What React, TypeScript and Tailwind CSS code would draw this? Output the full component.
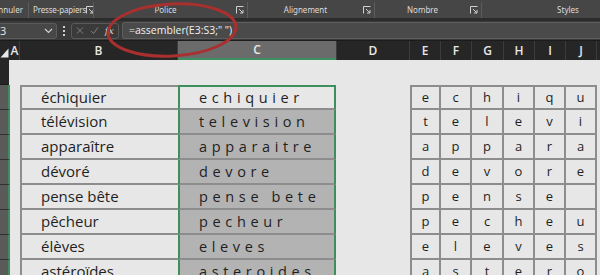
import React from 'react';

const words = [
  ['échiquier', 'echiquier', 'echiqu'],
  ['télévision', 'television', 'televi'],
  ['apparaître', 'apparaitre', 'appara'],
  ['dévoré', 'devore', 'devore'],
  ['pense bête', 'pense bete', 'pense '],
  ['pêcheur', 'pecheur', 'pecheu'],
  ['élèves', 'eleves', 'eleves'],
  ['astéroïdes', 'asteroides', 'astero'],
];

const letterCols = ['w-[31px]', 'w-[31px]', 'w-[32px]', 'w-[31px]', 'w-[31px]', 'w-[31px]'];
const headers = [
  { l: 'E', w: 'w-[31px]' },
  { l: 'F', w: 'w-[31px]' },
  { l: 'G', w: 'w-[32px]' },
  { l: 'H', w: 'w-[31px]' },
  { l: 'I', w: 'w-[31px]' },
  { l: 'J', w: 'w-[31px]' },
];

function Launcher() {
  return (
    <svg width="8" height="8" viewBox="0 0 8 8" className="shrink-0">
      <path d="M0.5 7.5V0.5H7.5" fill="none" stroke="#cfcfcf" strokeWidth="1" />
      <path d="M3 3L7 7M7 4V7H4" fill="none" stroke="#cfcfcf" strokeWidth="1" />
    </svg>
  );
}

function Sep() {
  return <div className="w-px h-full bg-[#5c5c5c] shrink-0" />;
}

export default function App() {
  return (
    <div className="relative w-[600px] h-[275px] overflow-hidden bg-[#e7e7e7] font-['Open_Sans','Noto_Sans',sans-serif]">
      {/* Ribbon group labels */}
      <div className="flex items-center h-[18px] pt-[2px] bg-[#464646] text-[8px] text-[#dcdcdc] whitespace-nowrap font-['Noto_Sans',sans-serif]">
        <div className="w-[28px] shrink-0 overflow-hidden flex justify-end pr-[5px] leading-none">Annuler</div>
        <Sep />
        <div className="flex items-center justify-between w-[64px] shrink-0 pl-[4px] pr-[3px]">
          <span className="leading-none tracking-[-0.02em]">Presse-papiers</span>
          <Launcher />
        </div>
        <Sep />
        <div className="flex items-center w-[153px] shrink-0 pr-[3px]">
          <span className="flex-1 text-center leading-none pl-[1px]">Police</span>
          <Launcher />
        </div>
        <Sep />
        <div className="flex items-center w-[126px] shrink-0 pr-[3px]">
          <span className="flex-1 text-center leading-none">Alignement</span>
          <Launcher />
        </div>
        <Sep />
        <div className="flex items-center w-[106px] shrink-0 pr-[3px]">
          <span className="flex-1 text-center leading-none">Nombre</span>
          <Launcher />
        </div>
        <Sep />
        <div className="flex-1 text-center leading-none pl-[54px]">Styles</div>
      </div>
      <div className="h-[3px] bg-[#2c2c2c]" />

      {/* Formula bar */}
      <div className="flex items-center h-[19px] bg-[#3a3a3a] gap-[3px]">
        <div className="flex items-center justify-between w-[57px] h-[16px] bg-[#474747] border border-[#5a5a5a] rounded-r-[3px] border-l-0 pr-[3px] overflow-hidden">
          <span className="text-[11px] text-[#e5e5e5] leading-none">3</span>
          <svg width="9" height="6" viewBox="0 0 9 6">
            <path d="M1 1L4.5 4.5L8 1" fill="none" stroke="#d0d0d0" strokeWidth="1.2" />
          </svg>
        </div>
        <div className="flex flex-col gap-[2px] w-[8px] items-center">
          <span className="w-[2px] h-[2px] bg-[#cfcfcf]" />
          <span className="w-[2px] h-[2px] bg-[#cfcfcf]" />
          <span className="w-[2px] h-[2px] bg-[#cfcfcf]" />
        </div>
        <div className="flex items-center gap-[6px] w-[48px] h-[16px] border border-[#5a5a5a] rounded-[3px] px-[4px]">
          <svg width="9" height="9" viewBox="0 0 9 9">
            <path d="M1 1L8 8M8 1L1 8" stroke="#8a8a8a" strokeWidth="1" />
          </svg>
          <svg width="10" height="9" viewBox="0 0 10 9">
            <path d="M1 5L4 8L9 1" fill="none" stroke="#8a8a8a" strokeWidth="1" />
          </svg>
          <span className="text-[10px] italic text-[#d8d8d8] leading-none font-['DejaVu_Serif',serif]">fx</span>
        </div>
        <div className="flex items-center flex-1 h-[17px] bg-[#4a4a4a] border border-[#5e5e5e] rounded-l-[3px] border-r-0 pl-[6px]">
          <span className="text-[10.5px] text-[#f0f0f0] leading-none whitespace-nowrap">=assembler(E3:S3;&quot; &quot;)</span>
        </div>
      </div>

      {/* Column headers */}
      <div className="flex h-[20px] bg-[#262626] text-[12px] text-[#e8e8e8] font-semibold border-t border-[#1c1c1c]">
        <div className="w-[10px] flex items-end pb-[2px]">
          <svg width="9" height="10" viewBox="0 0 9 10">
            <path d="M8.5 0.5V9.5H0.5Z" fill="#e8e8e8" />
          </svg>
        </div>
        <div className="w-[10px] flex items-center justify-center border-r border-[#3c3c3c]">A</div>
        <div className="w-[158px] flex items-center justify-center border-r border-[#3c3c3c]">B</div>
        <div className="w-[158px] flex items-center justify-center bg-[#6b6b6b] border-b-2 border-[#3d8f5e]">C</div>
        <div className="w-[74px] flex items-center justify-center border-l border-r border-[#3c3c3c]">D</div>
        {headers.map((h) => (
          <div key={h.l} className={`${h.w} flex items-center justify-center border-r border-[#3c3c3c]`}>
            {h.l}
          </div>
        ))}
        <div className="flex-1" />
      </div>

      {/* Sheet body */}
      <div className="flex">
        {/* Row headers */}
        <div className="flex flex-col w-[10px] shrink-0">
          <div className="h-[25px] bg-[#262626] border-b border-[#1c1c1c] mr-[1px]" />
          {words.map((w) => (
            <div key={w[0]} className="h-[25px] bg-[#5a5a5a] border-b border-[#303030] border-r-2 border-r-[#3d8f5e]" />
          ))}
        </div>

        {/* Cells */}
        <div className="flex flex-col text-[#1f1f1f]">
          <div className="h-[25px]" />
          {words.map((w, i) => (
            <div key={w[0]} className="flex h-[25px]">
              <div className="w-[10px]" />
              <div
                className={`w-[158px] flex items-center pl-[19px] text-[15px] bg-[#e7e7e7] border-l-2 border-b-2 border-[#8d8d8d] ${
                  i === 0 ? 'border-t-2' : ''
                }`}
              >
                {w[0]}
              </div>
              <div
                className={`w-[158px] flex items-center pl-[19px] text-[14.5px] tracking-[0.32em] whitespace-nowrap overflow-hidden border-x-2 border-x-[#3d8f5e] border-b-2 border-b-[#8d8d8d] ${
                  i === 0 ? 'bg-[#e7e7e7] border-t-2 border-t-[#3d8f5e]' : 'bg-[#b3b3b3]'
                }`}
              >
                {w[1]}
              </div>
              <div className="w-[74px]" />
              {letterCols.map((c, j) => (
                <div
                  key={j}
                  className={`${c} flex items-center justify-center text-[13px] border-r-2 border-b-2 border-[#8d8d8d] ${
                    j === 0 ? 'border-l-2' : ''
                  } ${i === 0 ? 'border-t-2' : ''}`}
                >
                  {w[2][j].trim()}
                </div>
              ))}
            </div>
          ))}
        </div>
      </div>

      {/* Red annotation ellipse */}
      <svg className="absolute left-0 top-0 pointer-events-none" width="600" height="275">
        <ellipse cx="172" cy="30" rx="64" ry="26" fill="none" stroke="#a8302f" strokeWidth="3" transform="rotate(-3 172 30)" />
      </svg>
    </div>
  );
}
